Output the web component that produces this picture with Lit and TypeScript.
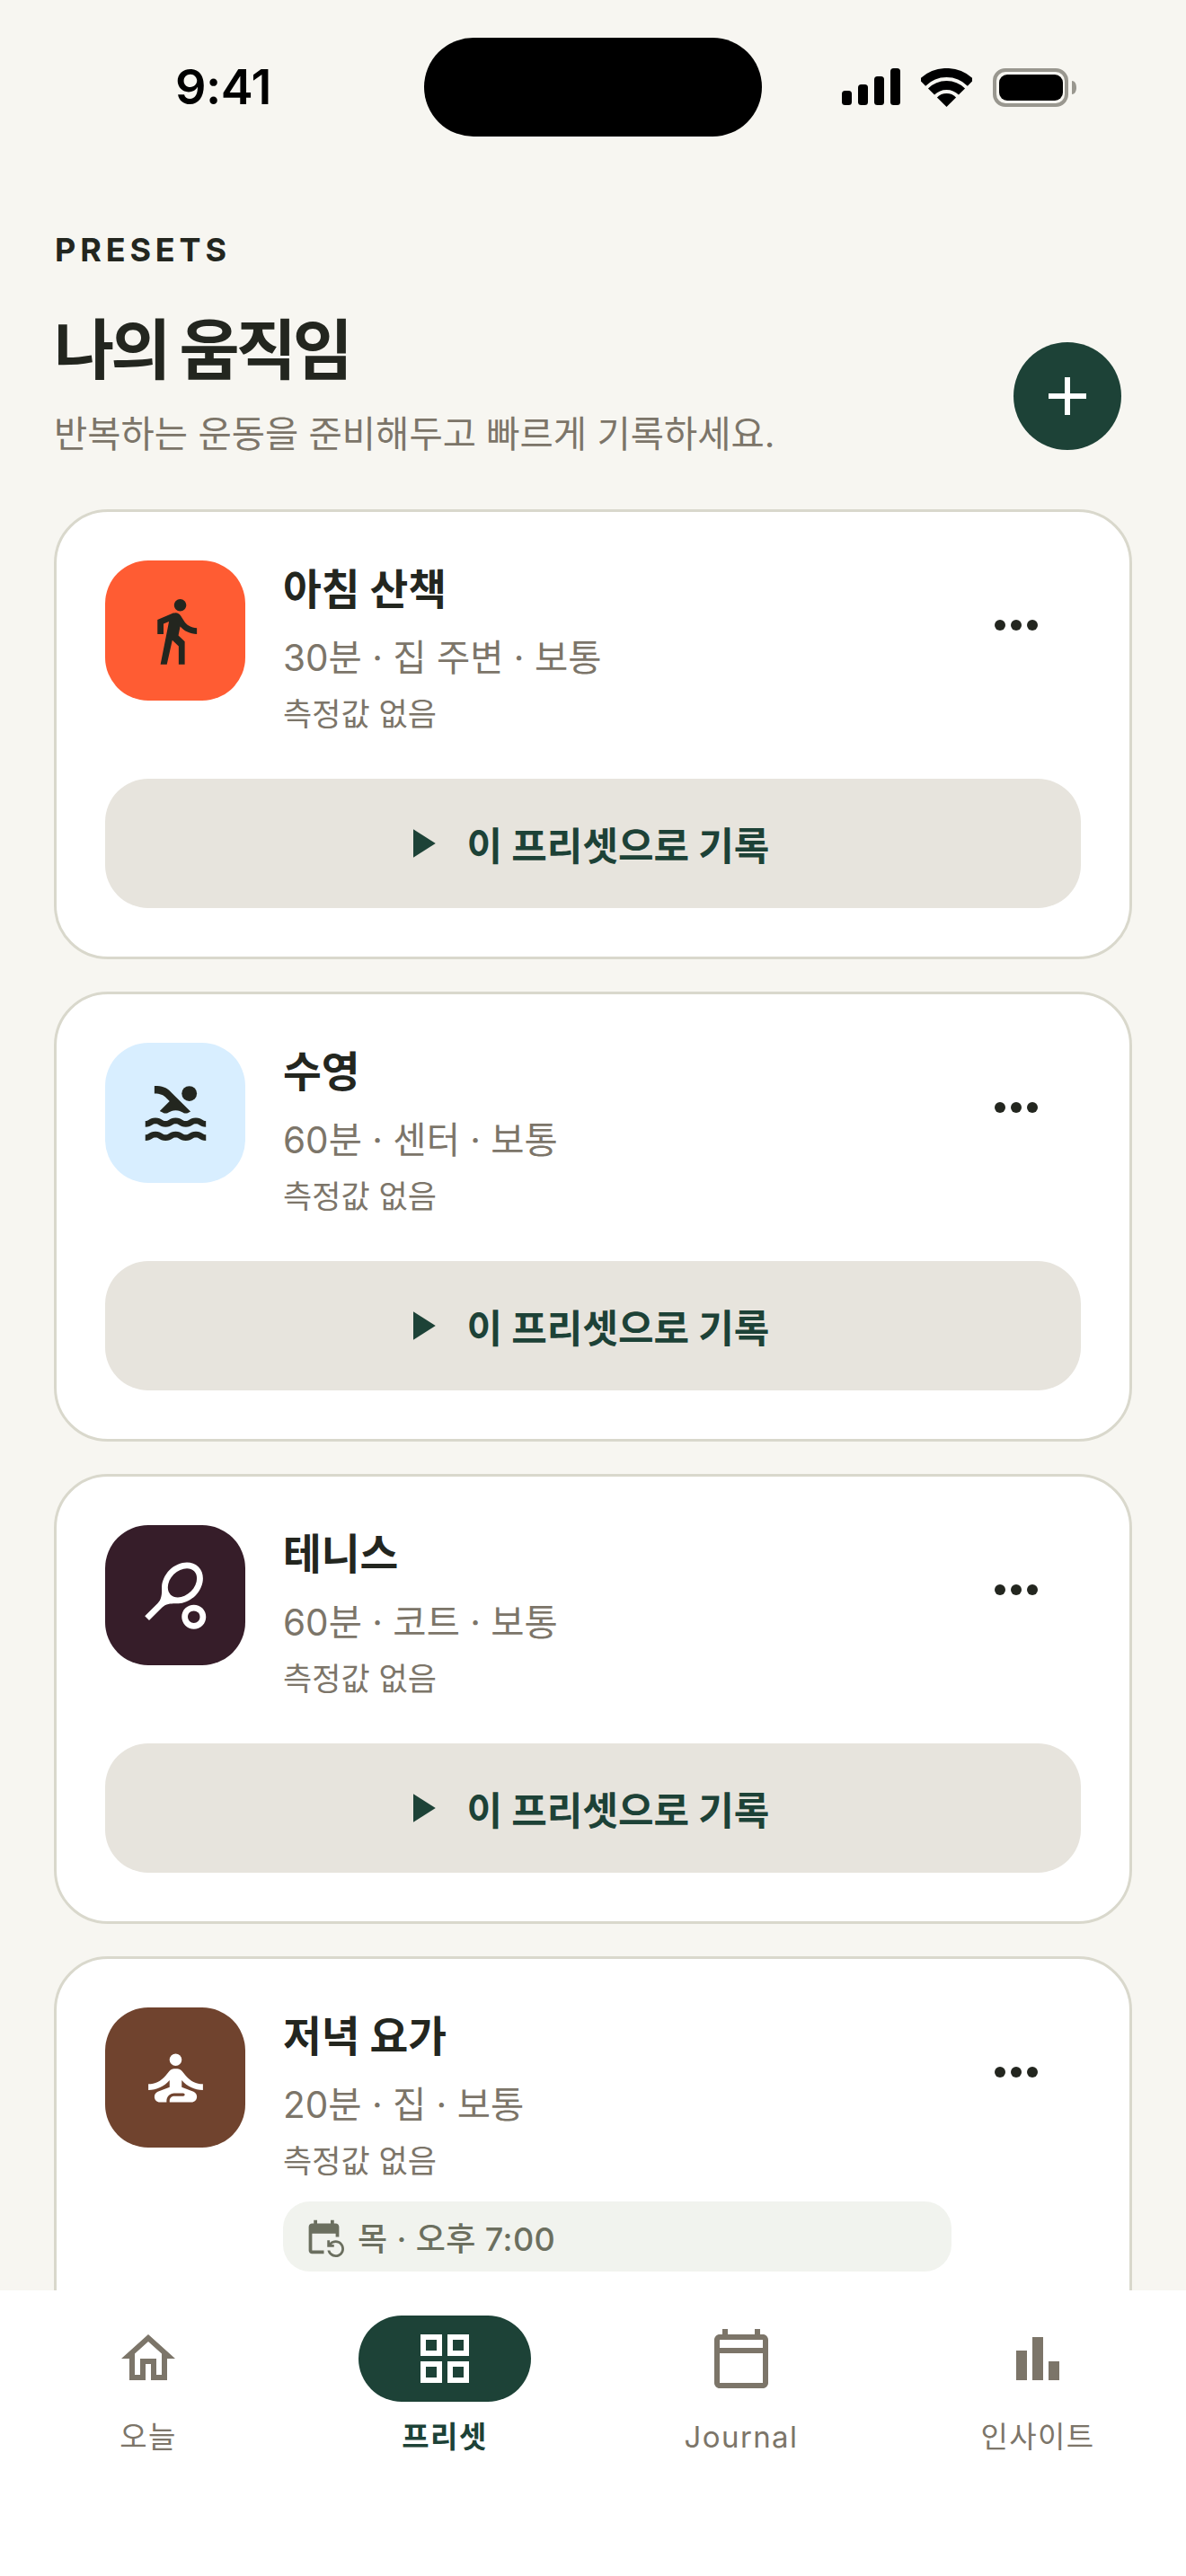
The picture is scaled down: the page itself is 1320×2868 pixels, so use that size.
import { LitElement, html, css, svg } from "lit";
import { customElement } from "lit/decorators.js";

const ICONS: Record<string, any> = {
  walk: svg`<path d="M13.5 5.5c1.1 0 2-.9 2-2s-.9-2-2-2-2 .9-2 2 .9 2 2 2zM9.8 8.9L7 23h2.1l1.8-8 2.1 2v6h2v-7.5l-2.1-2 .6-3C14.8 12 16.8 13 19 13v-2c-1.9 0-3.5-1-4.3-2.4l-1-1.6c-.4-.6-1-1-1.7-1-.3 0-.5.1-.8.1L6 8.3V13h2V9.6l1.8-.7"/>`,
  swim: svg`<path d="M22 21c-1.11 0-1.73-.37-2.18-.64-.37-.22-.6-.36-1.15-.36-.56 0-.78.13-1.15.36-.46.27-1.07.64-2.18.64s-1.73-.37-2.18-.64c-.37-.22-.6-.36-1.15-.36-.56 0-.78.13-1.15.36-.46.27-1.08.64-2.19.64-1.11 0-1.73-.37-2.18-.64-.37-.23-.6-.36-1.15-.36s-.78.13-1.15.36c-.46.27-1.08.64-2.19.64v-2c.56 0 .78-.13 1.15-.36.46-.27 1.08-.64 2.19-.64s1.73.37 2.18.64c.37.22.6.36 1.15.36.56 0 .78-.13 1.15-.36.46-.27 1.08-.64 2.19-.64 1.11 0 1.73.37 2.18.64.37.22.6.36 1.15.36s.78-.13 1.15-.36c.45-.27 1.07-.64 2.18-.64s1.73.37 2.18.64c.37.23.59.36 1.15.36v2zm0-4.5c-1.11 0-1.73-.37-2.18-.64-.37-.22-.6-.36-1.15-.36-.56 0-.78.13-1.15.36-.45.27-1.07.64-2.18.64s-1.73-.37-2.18-.64c-.37-.22-.6-.36-1.15-.36-.56 0-.78.13-1.15.36-.45.27-1.07.64-2.18.64s-1.73-.37-2.18-.64c-.37-.22-.6-.36-1.15-.36s-.78.13-1.15.36c-.47.27-1.09.64-2.2.64v-2c.56 0 .78-.13 1.15-.36.45-.27 1.07-.64 2.18-.64s1.73.37 2.18.64c.37.22.6.36 1.15.36.56 0 .78-.13 1.15-.36.45-.27 1.07-.64 2.18-.64s1.73.37 2.18.64c.37.22.6.36 1.15.36s.78-.13 1.15-.36c.45-.27 1.07-.64 2.18-.64s1.73.37 2.18.64c.37.22.6.36 1.15.36v2zM8.67 12c.56 0 .78-.13 1.15-.36.46-.27 1.08-.64 2.19-.64 1.11 0 1.73.37 2.18.64.37.22.6.36 1.15.36s.78-.13 1.15-.36c.12-.07.26-.15.41-.23L10.48 5C8.93 3.45 7.5 2.99 5 3v2.5c1.82-.01 2.89.39 4 1.5l1 1-3.25 3.25c.31.12.56.27.77.39.37.23.59.36 1.15.36z"/><circle cx="16.5" cy="5.5" r="2.5"/>`,
  tennis: svg`<path d="M19.52 2.49C17.18.15 12.9.62 9.97 3.55c-1.6 1.6-2.52 3.87-2.54 5.46-.02 1.58.26 3.89-1.35 5.5l-4.24 4.24 1.42 1.42 4.24-4.24c1.61-1.61 3.92-1.33 5.5-1.35s3.86-.94 5.46-2.54c2.92-2.93 3.41-7.2 1.06-9.55zm-9.2 9.19c-1.53-1.53-1.05-4.61 1.06-6.72s5.18-2.59 6.72-1.06c1.53 1.53 1.05 4.61-1.06 6.72s-5.18 2.59-6.72 1.06zM18 17c.53 0 1.04.21 1.41.59.78.78.78 2.05 0 2.83-.37.37-.88.58-1.41.58s-1.04-.21-1.41-.59c-.78-.78-.78-2.05 0-2.83.37-.37.88-.58 1.41-.58m0-2c-1.06 0-2.08.42-2.83 1.17-1.56 1.56-1.56 4.09 0 5.66.75.75 1.77 1.17 2.83 1.17s2.08-.42 2.83-1.17c1.56-1.56 1.56-4.09 0-5.66C20.08 15.42 19.06 15 18 15z"/>`,
  yoga: svg`<circle cx="12" cy="6" r="2"/><path d="M21 16v-2c-2.24 0-4.16-.96-5.6-2.68l-1.34-1.6c-.38-.46-.94-.72-1.53-.72h-1.05c-.59 0-1.15.26-1.53.72l-1.34 1.6C7.16 13.04 5.24 14 3 14v2c2.77 0 5.19-1.17 7-3.25V15l-3.88 1.55c-.67.27-1.12.93-1.12 1.66C5 19.2 5.8 20 6.79 20H9v-.5c0-1.38 1.12-2.5 2.5-2.5h3c.28 0 .5.22.5.5s-.22.5-.5.5h-3c-.83 0-1.5.67-1.5 1.5v.5h7.21c.99 0 1.79-.8 1.79-1.79 0-.73-.45-1.39-1.12-1.66L14 15v-2.25c1.81 2.08 4.23 3.25 7 3.25z"/>`,
  home: svg`<path d="M12 5.69l5 4.5V18h-2v-6H9v6H7v-7.81l5-4.5M12 3L2 12h3v8h6v-6h2v6h6v-8h3L12 3z"/>`,
  grid: svg`<path d="M3 3v8h8V3H3zm6 6H5V5h4v4zm-6 4v8h8v-8H3zm6 6H5v-4h4v4zm4-16v8h8V3h-8zm6 6h-4V5h4v4zm-6 4v8h8v-8h-8zm6 6h-4v-4h4v4z"/>`,
  cal: svg`<path fill-rule="evenodd" d="M20 3h-1V1h-2v2H7V1H5v2H4c-1.1 0-2 .9-2 2v16c0 1.1.9 2 2 2h16c1.1 0 2-.9 2-2V5c0-1.1-.9-2-2-2zM4 5h16v3H4V5zm0 16V10h16v11H4z"/>`,
  bars: svg`<path d="M4 9h4v11H4zM10 4h4v16h-4zM16 13h4v7h-4z"/>`,
  more: svg`<circle cx="6" cy="12" r="2"/><circle cx="12" cy="12" r="2"/><circle cx="18" cy="12" r="2"/>`,
  play: svg`<path d="M8 5v14l11-7z"/>`,
  add: svg`<path d="M19 13h-6v6h-2v-6H5v-2h6V5h2v6h6v2z"/>`,
  repeat: svg`<path d="M21 12V6c0-1.1-.9-2-2-2h-1V2h-2v2H8V2H6v2H5c-1.1 0-2 .9-2 2v14c0 1.1.9 2 2 2h7v-2H5V10h14v2h2zm-5.36 8c.43 1.45 1.77 2.5 3.36 2.5 1.93 0 3.5-1.57 3.5-3.5s-1.57-3.5-3.5-3.5c-.95 0-1.82.38-2.45 1H18V18h-4v-4h1.5v1.43c.9-.88 2.14-1.43 3.5-1.43 2.76 0 5 2.24 5 5s-2.24 5-5 5c-2.42 0-4.44-1.72-4.9-4h1.54z"/>`,
};

const icon = (name: string, cls = "") =>
  html`<svg class="ic ${cls}" viewBox="0 0 24 24" fill="currentColor">${ICONS[name]}</svg>`;

const PRESETS = [
  { title: "아침 산책", sub: "30분 · 집 주변 · 보통", icon: "walk", tone: "orange" },
  { title: "수영", sub: "60분 · 센터 · 보통", icon: "swim", tone: "blue" },
  { title: "테니스", sub: "60분 · 코트 · 보통", icon: "tennis", tone: "plum" },
  { title: "저녁 요가", sub: "20분 · 집 · 보통", icon: "yoga", tone: "brown", chip: "목 · 오후 7:00" },
];

const TABS = [
  { label: "오늘", icon: "home" },
  { label: "프리셋", icon: "grid", active: true },
  { label: "Journal", icon: "cal" },
  { label: "인사이트", icon: "bars" },
];

@customElement("app-root")
export class AppRoot extends LitElement {
  static styles = css`
    :host {
      display: block;
      position: relative;
      width: 1320px;
      height: 2868px;
      overflow: hidden;
      background: #f7f6f1;
      color: #23261f;
      font-family: Inter, "Noto Sans CJK KR", sans-serif;
    }
    .ic { display: block; flex: none; }

    .status {
      display: grid;
      grid-template-columns: 1fr 376px 1fr;
      height: 110px;
      padding-top: 42px;
      color: #000;
    }
    .time {
      font-size: 54px;
      font-weight: 600;
      line-height: 110px;
      padding-left: 195px;
      letter-spacing: -0.5px;
    }
    .island { background: #000; border-radius: 55px; }
    .sys {
      display: flex;
      align-items: center;
      justify-content: flex-end;
      gap: 23px;
      padding-right: 122px;
      height: 110px;
      box-sizing: border-box;
    }
    .sys svg { display: block; }

    .head {
      display: flex;
      justify-content: space-between;
      align-items: flex-end;
      padding: 106px 72px 0 60px;
    }
    .eyebrow {
      font-size: 36px;
      font-weight: 700;
      letter-spacing: 0.135em;
      line-height: 40px;
      padding-left: 1px;
    }
    h1 {
      margin: 44px 0 0;
      font-size: 73px;
      font-weight: 700;
      letter-spacing: -0.055em;
      line-height: 96px;
    }
    .lead {
      margin: 17px 0 0;
      font-size: 40.5px;
      color: #7c7569;
      line-height: 58px;
    }
    .fab {
      width: 120px;
      height: 120px;
      border-radius: 50%;
      background: #1d4237;
      color: #fff;
      display: flex;
      align-items: center;
      justify-content: center;
      margin-bottom: 12px;
    }
    .fab .ic { width: 72px; height: 72px; }

    .list {
      display: flex;
      flex-direction: column;
      gap: 36px;
      padding: 54px 60px 0;
    }
    .card {
      background: #fff;
      border: 3px solid #d9d8cc;
      border-radius: 60px;
      padding: 54px;
    }
    .row { display: flex; align-items: flex-start; }
    .tile {
      width: 156px;
      height: 156px;
      border-radius: 48px;
      flex: none;
      display: flex;
      align-items: center;
      justify-content: center;
      margin-right: 42px;
    }
    .tile .ic { width: 81px; height: 81px; }
    .orange { background: #ff5c33; color: #23261f; }
    .blue { background: #d8eeff; color: #23261f; }
    .plum { background: #361d29; color: #fff; }
    .brown { background: #70432e; color: #fff; }
    .body { flex: 1; min-width: 0; padding-top: 2px; }
    .title { font-size: 46.5px; font-weight: 700; line-height: 60px; }
    .sub { font-size: 40.5px; color: #7c7569; line-height: 54px; margin-top: 20px; }
    .meta { font-size: 35px; color: #7c7569; line-height: 44px; margin-top: 13px; }
    .more {
      width: 144px;
      height: 144px;
      flex: none;
      display: flex;
      align-items: center;
      justify-content: center;
      color: #23261f;
    }
    .more .ic { width: 72px; height: 72px; }
    .chip {
      display: flex;
      align-items: center;
      gap: 15px;
      height: 78px;
      margin-top: 23px;
      padding: 0 23px;
      border-radius: 30px;
      background: #f1f3ee;
      color: #6b6f5f;
      font-size: 36px;
      font-weight: 500;
      letter-spacing: 0.4px;
    }
    .chip .ic { width: 45px; height: 45px; }
    .go {
      display: flex;
      align-items: center;
      justify-content: center;
      gap: 24px;
      height: 144px;
      margin-top: 50px;
      padding-right: 22px;
      border-radius: 48px;
      background: #e7e4dd;
      color: #1d4237;
      font-size: 43px;
      font-weight: 700;
    }
    .go .ic { width: 54px; height: 54px; }

    .nav {
      position: absolute;
      left: 0;
      right: 0;
      bottom: 0;
      height: 318px;
      background: #fff;
      display: grid;
      grid-template-columns: repeat(4, 1fr);
    }
    .tab {
      display: flex;
      flex-direction: column;
      align-items: center;
      padding-top: 28px;
      color: #7c7569;
    }
    .pill {
      width: 192px;
      height: 96px;
      border-radius: 48px;
      display: flex;
      align-items: center;
      justify-content: center;
    }
    .pill .ic { width: 72px; height: 72px; }
    .tab.on .pill { background: #1d4237; color: #fff; }
    .tab.on { color: #1d4237; font-weight: 700; }
    .lbl { font-size: 33px; line-height: 44px; margin-top: 17px; letter-spacing: 1.4px; }
  `;

  render() {
    return html`
      <div class="status">
        <div class="time">9:41</div>
        <div class="island"></div>
        <div class="sys">
          <svg width="65" height="42" viewBox="0 0 65 42" fill="#000">
            <rect x="0" y="25" width="11" height="16" rx="3.5" />
            <rect x="18" y="18" width="11" height="23" rx="3.5" />
            <rect x="36" y="9" width="11" height="32" rx="3.5" />
            <rect x="54" y="0" width="11" height="41" rx="3.5" />
          </svg>
          <svg width="57" height="43" viewBox="0 0 57 43" fill="none" stroke="#000" stroke-width="10">
            <path d="M1.6 16.1A38 38 0 0 1 55.4 16.1" />
            <path d="M11.5 26A24 24 0 0 1 45.5 26" />
            <path d="M28.5 43L17.9 32.4A15 15 0 0 1 39.1 32.4Z" fill="#000" stroke="none" />
          </svg>
          <svg width="93" height="43" viewBox="0 0 93 43">
            <rect x="2" y="2" width="80" height="39" rx="12" fill="none" stroke="#99978f" stroke-width="4" />
            <rect x="7" y="7" width="71" height="29" rx="9" fill="#000" />
            <path d="M88 14c3 0 5 3 5 7.5s-2 7.5-5 7.5z" fill="#99978f" />
          </svg>
        </div>
      </div>

      <header class="head">
        <div>
          <div class="eyebrow">PRESETS</div>
          <h1>나의 움직임</h1>
          <p class="lead">반복하는 운동을 준비해두고 빠르게 기록하세요.</p>
        </div>
        <div class="fab">${icon("add")}</div>
      </header>

      <section class="list">
        ${PRESETS.map(
          (p) => html`
            <article class="card">
              <div class="row">
                <div class="tile ${p.tone}">${icon(p.icon)}</div>
                <div class="body">
                  <div class="title">${p.title}</div>
                  <div class="sub">${p.sub}</div>
                  <div class="meta">측정값 없음</div>
                  ${p.chip ? html`<div class="chip">${icon("repeat")}<span>${p.chip}</span></div>` : ""}
                </div>
                <div class="more">${icon("more")}</div>
              </div>
              <div class="go">${icon("play")}<span>이 프리셋으로 기록</span></div>
            </article>
          `
        )}
      </section>

      <nav class="nav">
        ${TABS.map(
          (t) => html`
            <div class="tab ${t.active ? "on" : ""}">
              <div class="pill">${icon(t.icon)}</div>
              <div class="lbl">${t.label}</div>
            </div>
          `
        )}
      </nav>
    `;
  }
}
